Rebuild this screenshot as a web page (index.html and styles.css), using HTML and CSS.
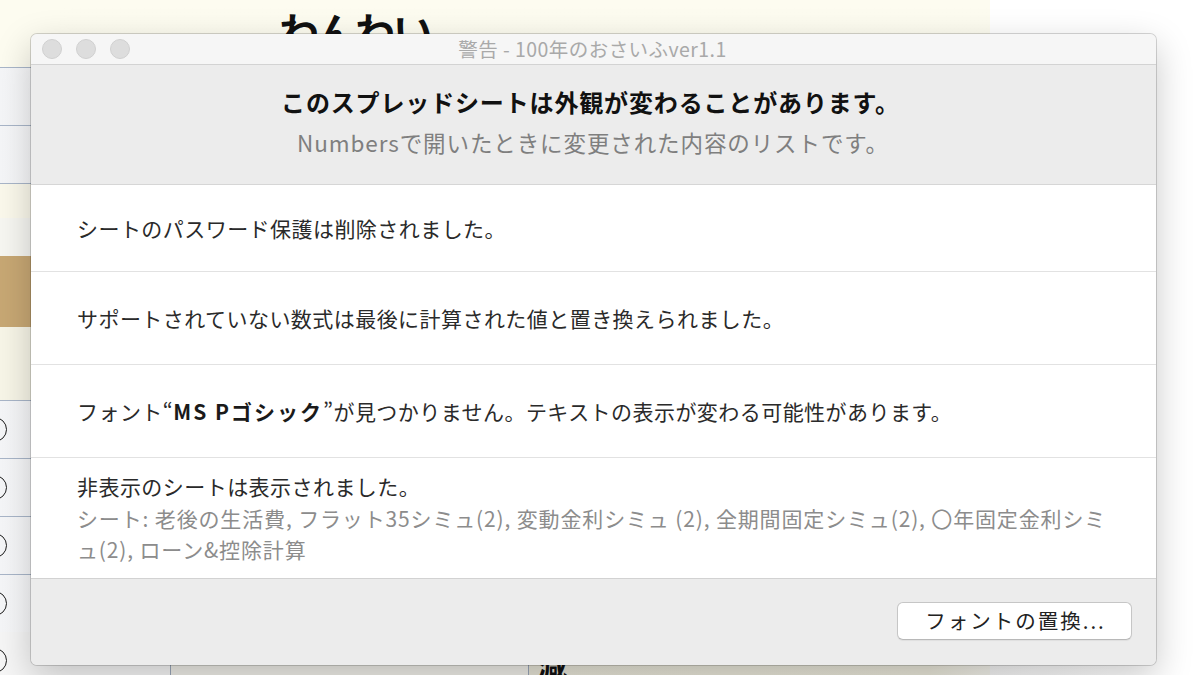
FILE: index.html
```html
<!DOCTYPE html>
<html lang="ja">
<head>
<meta charset="utf-8">
<title>警告</title>
<link rel="stylesheet" href="styles.css">
</head>
<body>
<div class="sheet">
  <div class="sheet-top">
    <div class="left-col">
      <div class="lc lc-cream lc-top"></div>
      <div class="lc lc-row"></div>
      <div class="lc lc-row"></div>
      <div class="lc lc-cream lc-gap"></div>
      <div class="lc lc-pale lc-gap2"></div>
      <div class="lc lc-tan"></div>
      <div class="lc lc-cream lc-gap3"></div>
      <div class="lc lc-row lc-circ"><span class="circ"></span></div>
      <div class="lc lc-row lc-circ"><span class="circ"></span></div>
      <div class="lc lc-row lc-circ"><span class="circ"></span></div>
      <div class="lc lc-row lc-circ"><span class="circ"></span></div>
    </div>
    <div class="sheet-main">
      <div class="sheet-heading">わんわい</div>
    </div>
    <div class="sheet-right"></div>
  </div>
  <div class="sheet-bottom">
    <div class="bc bc-1"><span class="circ"></span></div>
    <div class="bc bc-2"></div>
    <div class="bc bc-3">減</div>
    <div class="bc-4"></div>
  </div>
</div>

<div class="dialog">
  <div class="titlebar">
    <div class="lights">
      <span class="light"></span><span class="light"></span><span class="light"></span>
    </div>
    <div class="title">警告 - 100年のおさいふver1.1</div>
  </div>
  <div class="header">
    <div class="headline">このスプレッドシートは外観が変わることがあります。</div>
    <div class="subline">Numbersで開いたときに変更された内容のリストです。</div>
  </div>
  <div class="list">
    <div class="item item-first">シートのパスワード保護は削除されました。</div>
    <div class="item">サポートされていない数式は最後に計算された値と置き換えられました。</div>
    <div class="item">フォント“<b class="fontname">MS Pゴシック</b>”が見つかりません。テキストの表示が変わる可能性があります。</div>
    <div class="item item-last">
      <div>非表示のシートは表示されました。</div>
      <div class="detail">シート: 老後の生活費, フラット35シミュ(2), 変動金利シミュ (2), 全期間固定シミュ(2), 〇年固定金利シミ<br>ュ(2), ローン&amp;控除計算</div>
    </div>
  </div>
  <div class="footer">
    <button class="btn">フォントの置換...</button>
  </div>
</div>
</body>
</html>
```

FILE: styles.css
```css
html, body {
  margin: 0;
  padding: 0;
}
body {
  width: 1200px;
  height: 675px;
  overflow: hidden;
  position: relative;
  font-family: "Noto Sans CJK JP", "Noto Sans", sans-serif;
  background: #ffffff;
}

/* background spreadsheet */
.sheet {
  display: flex;
  flex-direction: column;
  width: 1200px;
  height: 675px;
}
.sheet-top {
  display: flex;
  height: 630px;
}
.left-col {
  width: 60px;
  display: flex;
  flex-direction: column;
  background: #f8f7ef;
}
.lc { flex: none; }
.lc-cream { background: #fbf9ec; }
.lc-top { height: 67px; background: #fdfcf0; }
.lc-row {
  height: 57px;
  border-top: 1px solid #a9b6c9;
  background: linear-gradient(90deg, #f5f6f8, #fafafb);
  position: relative;
  overflow: hidden;
}
.lc-gap { height: 34px; border-top: 1px solid #a9b6c9; }
.lc-pale { background: #f7f7f2; }
.lc-gap2 { height: 38px; }
.lc-tan { height: 71px; background: #c8a874; }
.lc-gap3 { height: 73px; background: #f8f6e8; }
.lc-circ { height: 57px; }
.circ {
  display: block;
  width: 25px;
  height: 25px;
  border: 1.5px solid #1c1c1c;
  border-radius: 50%;
  margin: 16px 0 0 -18px;
  box-sizing: border-box;
}
.sheet-main {
  width: 930px;
  background: linear-gradient(180deg, #fdfcf0, #fbfaee);
}
.sheet-heading {
  padding: 2px 0 0 219px;
  font-size: 40px;
  font-weight: 700;
  color: #111;
  letter-spacing: -2px;
  line-height: 56px;
}
.sheet-right {
  flex: 1;
  background: #ffffff;
}
.sheet-bottom {
  display: flex;
  height: 45px;
  background: #ebe9df;
}
.bc {
  border-top: 1px solid #b5bfcd;
  overflow: hidden;
}
.bc-1 { width: 170px; background: #f6f6f6; }
.bc-1 .circ { margin-top: 17px; }
.bc-2 { width: 357px; border-left: 1px solid #9aa6b8; background: #efeee8; }
.bc-3 {
  width: 462px;
  border-left: 1px solid #9aa6b8;
  background: linear-gradient(90deg, #e6e4d6 0, #e8e6d8 400px, #f2f1ea 462px);
  font-size: 30px;
  font-weight: 700;
  color: #111;
  padding: 14px 0 0 8px;
  line-height: 40px;
  box-sizing: border-box;
}
.bc-4 {
  flex: 1;
  background: linear-gradient(90deg, #f4f4f4, #ffffff 120px);
}

/* dialog */
.dialog {
  position: absolute;
  left: 31px;
  top: 34px;
  width: 1125px;
  height: 631px;
  box-sizing: border-box;
  border-radius: 6px;
  background: #ececec;
  box-shadow: 0 0 0 1px rgba(0, 0, 0, 0.16), 0 12px 36px rgba(0, 0, 0, 0.22);
  display: flex;
  flex-direction: column;
  overflow: hidden;
}
.titlebar {
  height: 30px;
  flex: none;
  background: #f6f6f6;
  border-bottom: 1px solid #d3d3d3;
  display: flex;
  align-items: center;
  position: relative;
}
.lights {
  display: flex;
  gap: 14px;
  padding-left: 11px;
}
.light {
  width: 20px;
  height: 20px;
  border-radius: 50%;
  background: #dddddd;
  border: 1px solid #d0d0d0;
  box-sizing: border-box;
}
.title {
  position: absolute;
  left: 0;
  right: 0;
  top: 0;
  text-align: center;
  font-size: 19.5px;
  line-height: 30px;
  color: #a9a9a9;
  letter-spacing: 0.45px;
  padding-right: 2px;
}
.header {
  height: 120px;
  flex: none;
  box-sizing: border-box;
  border-bottom: 1px solid #d6d6d6;
  background: #ececec;
  text-align: center;
  padding-top: 20px;
}
.headline {
  font-size: 24px;
  font-weight: 700;
  color: #111;
  line-height: 34px;
  letter-spacing: 0.85px;
  padding-right: 6px;
}
.subline {
  font-size: 22.5px;
  color: #7f7f7f;
  line-height: 34px;
  margin-top: 6px;
  letter-spacing: 0.9px;
  padding-right: 1px;
}
.list {
  flex: none;
  background: #ffffff;
  border-bottom: 1px solid #d2d2d2;
}
.item {
  padding: 30px 40px 30px 46px;
  font-size: 21px;
  line-height: 32px;
  color: #2a2a2a;
  letter-spacing: 0.45px;
  border-top: 1px solid #e2e2e2;
}
.item-first {
  border-top: none;
  padding-top: 27px;
  padding-bottom: 27px;
}
.item-last {
  padding-top: 13px;
  padding-bottom: 12px;
  line-height: 31.5px;
}
.fontname {
  font-weight: 700;
  letter-spacing: 2px;
  color: #1a1a1a;
}
.detail {
  color: #8c8c8c;
  white-space: nowrap;
  letter-spacing: 0.85px;
}
.footer {
  flex: 1;
  display: flex;
  justify-content: flex-end;
  align-items: flex-start;
  padding: 23px 24px 0 0;
  background: #ececec;
}
.btn {
  width: 235px;
  height: 38px;
  background: #ffffff;
  border: 1px solid #c6c6c6;
  border-bottom-color: #b8b8b8;
  border-radius: 6px;
  font-family: "Noto Sans CJK JP", "Noto Sans", sans-serif;
  font-size: 20.5px;
  letter-spacing: 2px;
  color: #222;
  padding: 0 0 2px 2px;
  box-shadow: 0 1px 1px rgba(0, 0, 0, 0.06);
}
```
